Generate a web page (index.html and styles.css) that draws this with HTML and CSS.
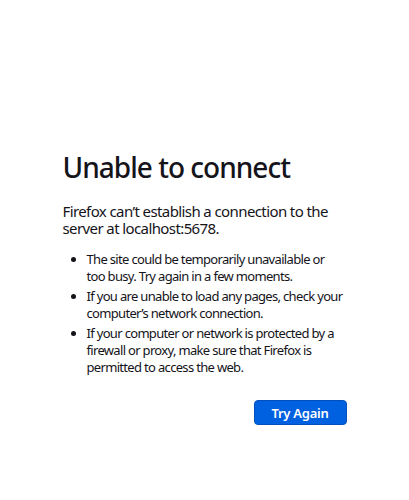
FILE: index.html
```html
<!DOCTYPE html>
<html lang="en">
<head>
<meta charset="utf-8">
<title>Problem loading page</title>
<link rel="stylesheet" href="styles.css">
</head>
<body>
<main class="container">
  <h1 class="title">Unable to connect</h1>
  <p class="intro">Firefox can’t establish a connection to the server at localhost:5678.</p>
  <ul class="tips">
    <li>The site could be temporarily unavailable or<br>too busy. Try again in a few moments.</li>
    <li>If you are unable to load any pages, check your<br>computer’s network connection.</li>
    <li>If your computer or network is protected by a<br>firewall or proxy, make sure that Firefox is<br>permitted to access the web.</li>
  </ul>
  <div class="actions">
    <button class="try-again" type="button">Try Again</button>
  </div>
</main>
</body>
</html>
```

FILE: styles.css
```css
html, body {
  margin: 0;
  padding: 0;
  background: #ffffff;
}
body {
  font-family: "Noto Sans", "Open Sans", sans-serif;
  color: #15141a;
}
.container {
  width: 284px;
  margin: 0 auto;
  padding: 148px 0 0 0;
  box-sizing: border-box;
}
.title {
  margin: 0;
  font-size: 28px;
  font-weight: 500;
  line-height: 38px;
  letter-spacing: -0.035em;
}
.intro {
  margin: 17px 0 0 0;
  font-size: 15px;
  line-height: 17px;
  letter-spacing: -0.04em;
}
.tips {
  margin: 14px 0 0 0;
  padding: 0 0 0 24px;
  font-size: 13px;
  line-height: 17px;
  letter-spacing: -0.052em;
}
.tips li {
  margin-bottom: 3px;
}
.actions {
  display: flex;
  justify-content: flex-end;
  margin-top: 24px;
}
.try-again {
  font-family: inherit;
  font-size: 13px;
  font-weight: 600;
  letter-spacing: -0.02em;
  color: #ffffff;
  background: #0061e0;
  border: 1px solid #0250bb;
  border-radius: 4px;
  height: 25px;
  width: 93px;
  padding: 0;
}
```
